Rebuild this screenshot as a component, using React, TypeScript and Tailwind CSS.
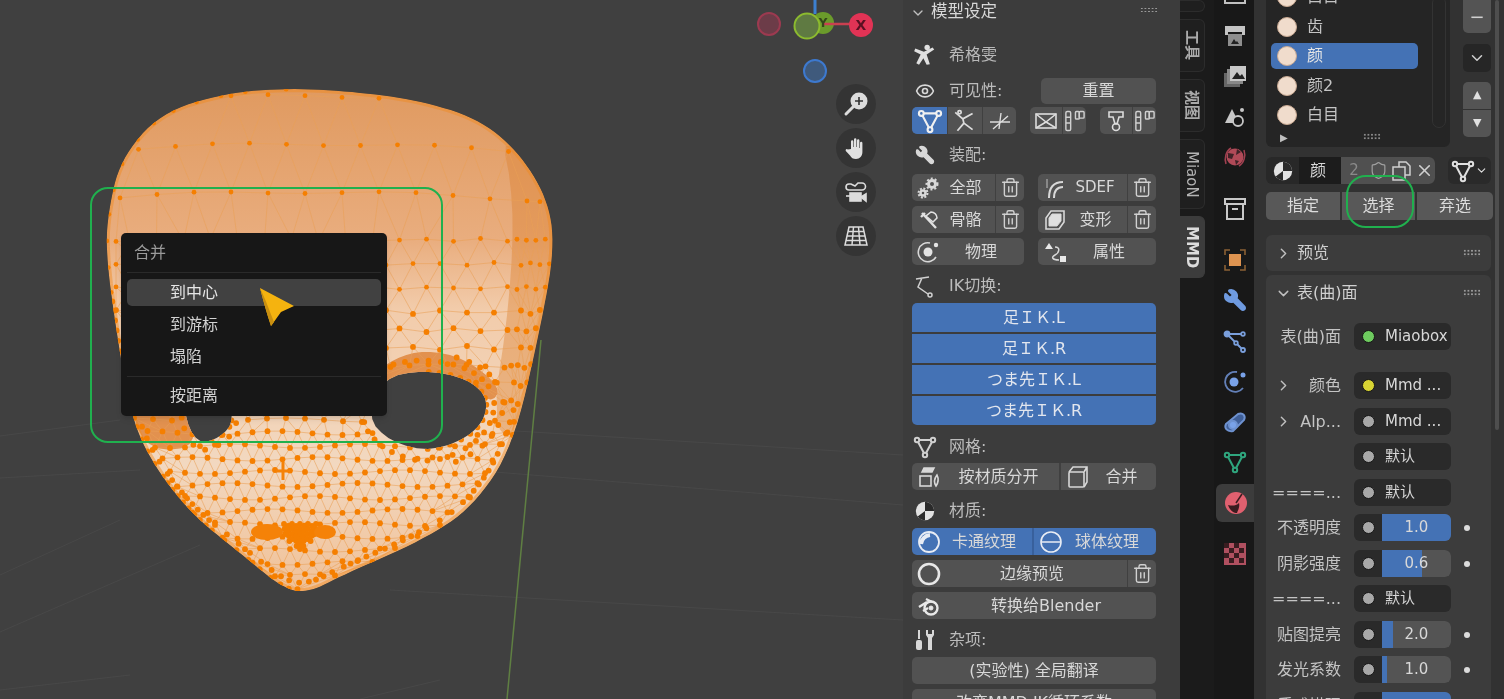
import type { ReactNode } from 'react';
import { ChevronDown, ChevronRight, Eye, Wrench, Trash2, X, Shield, Circle } from 'lucide-react';

type Pt = [number, number];

// smooth a rough outline so it can be used for both drawing and hit testing
function chaikin(points: Pt[], rounds = 3): Pt[] {
  let pts = points;
  for (let r = 0; r < rounds; r++) {
    const next: Pt[] = [];
    pts.forEach((p, i) => {
      const q = pts[(i + 1) % pts.length];
      next.push([p[0] * 0.75 + q[0] * 0.25, p[1] * 0.75 + q[1] * 0.25]);
      next.push([p[0] * 0.25 + q[0] * 0.75, p[1] * 0.25 + q[1] * 0.75]);
    });
    pts = next;
  }
  return pts;
}

function inside(p: Pt, poly: Pt[]) {
  let hit = false;
  for (let i = 0, j = poly.length - 1; i < poly.length; j = i++) {
    const [xi, yi] = poly[i];
    const [xj, yj] = poly[j];
    if (yi > p[1] !== yj > p[1] && p[0] < ((xj - xi) * (p[1] - yi)) / (yj - yi) + xi) hit = !hit;
  }
  return hit;
}

const toPath = (poly: Pt[]) => 'M' + poly.map((p) => `${p[0].toFixed(1)} ${p[1].toFixed(1)}`).join('L') + 'Z';

const outline = chaikin([
  [290, 88], [225, 93], [160, 113], [120, 160], [108, 213], [106, 253], [115, 323], [130, 413], [150, 460], [190, 513],
  [240, 553], [285, 590], [310, 592], [343, 575], [423, 540], [473, 507], [513, 447], [540, 330], [555, 247], [547, 197],
  [517, 150], [477, 118], [417, 100], [357, 92],
]);
const eyeR = chaikin([[367, 417], [383, 378], [423, 370], [467, 378], [490, 400], [478, 432], [433, 452], [390, 442]], 2);
const eyeL = chaikin([[183, 413], [197, 444], [220, 438], [235, 420], [223, 373], [190, 370]], 2);
const lid = chaikin([[368, 378], [395, 358], [425, 350], [465, 358], [502, 388], [490, 404], [467, 380], [423, 372], [383, 382]], 2);
const lidL = chaikin([[128, 410], [180, 400], [200, 446], [150, 452]], 2);
const cheek = chaikin([[500, 128], [550, 200], [555, 250], [540, 335], [513, 445], [492, 420], [510, 300], [514, 200]], 2);

function sampleEdge(poly: Pt[], step: (y: number) => number) {
  const out: Pt[] = [];
  let left = 0;
  poly.forEach((p, i) => {
    const q = poly[(i + 1) % poly.length];
    const d = Math.hypot(q[0] - p[0], q[1] - p[1]);
    left += d;
    if (left >= step(p[1])) {
      out.push(p);
      left = 0;
    }
  });
  return out;
}

function buildMesh() {
  const rows: Pt[][] = [];
  let y = 96;
  let n = 0;
  const free = (p: Pt) => inside(p, outline) && !inside(p, eyeR) && !inside(p, eyeL);
  while (y < 592) {
    const sy = y < 200 ? 48 : y < 300 ? 24 : y < 420 ? 18 : 13;
    const sx = y < 240 ? 37 : y < 360 ? 27 : y < 430 ? 19 : 15;
    const row: Pt[] = [];
    const wob = (x: number) => Math.sin(x * 0.37 + n) * (y < 300 ? 1.5 : 2);
    const bend = (x: number) => (y < 220 ? ((x - 300) / 230) ** 2 * 8 : 0);
    let x = 305 + (n % 2 ? sx / 2 : 0);
    while (x < 560) {
      row.push([x, y + wob(x) + bend(x)]);
      x += x > 495 && y < 440 ? sx * 0.35 : sx;
    }
    x = 305 + (n % 2 ? sx / 2 : 0) - sx;
    while (x > 100) {
      row.unshift([x, y + wob(x) + bend(x)]);
      x -= x < 130 && y < 440 ? sx * 0.5 : sx;
    }
    rows.push(row.filter(free));
    y += sy;
    n++;
  }
  const lines: string[] = [];
  rows.forEach((row, r) => {
    row.forEach((p, i) => {
      if (i + 1 < row.length && row[i + 1][0] - p[0] < 60) lines.push(`M${p[0].toFixed(1)} ${p[1].toFixed(1)}L${row[i + 1][0].toFixed(1)} ${row[i + 1][1].toFixed(1)}`);
      const below = rows[r + 1];
      if (!below) return;
      [...below]
        .sort((a, b) => Math.abs(a[0] - p[0]) - Math.abs(b[0] - p[0]))
        .slice(0, 2)
        .forEach((q) => lines.push(`M${p[0].toFixed(1)} ${p[1].toFixed(1)}L${q[0].toFixed(1)} ${q[1].toFixed(1)}`));
    });
  });
  const edge = sampleEdge(outline, (yy) => (yy < 300 ? 22 : 8));
  const nose: Pt[] = [];
  for (let i = 0; i < 9; i++) {
    const end = 552 - Math.abs(i - 4) * 4;
    for (let yy = 524; yy < end; yy += 5) nose.push([284 + i * 4 + (yy - 524) * (4 - i) * 0.03, yy + (i % 2) * 2]);
  }
  const rim: Pt[] = [
    ...edge,
    ...edge.filter((p) => p[1] > 400).map((p): Pt => [p[0] + (300 - p[0]) * 0.035, p[1] + (420 - p[1]) * 0.05]),
    ...sampleEdge(eyeR, () => 6),
    ...sampleEdge(eyeL, () => 6),
    ...sampleEdge(eyeR, () => 7).map((p): Pt => [p[0] + (p[0] - 430) * 0.14, p[1] + (p[1] - 410) * 0.3]),
    ...sampleEdge(eyeR, () => 7).filter((p) => p[0] > 440).map((p): Pt => [p[0] + (p[0] - 430) * 0.3, p[1] + (p[1] - 410) * 0.5]),
    ...sampleEdge(eyeL, () => 7).map((p): Pt => [p[0] + (p[0] - 208) * 0.2, p[1] + (p[1] - 410) * 0.25]),
    ...nose,
  ].filter(free);
  return { d: lines.join(''), dots: [...rows.flat(), ...rim] };
}

const mesh = buildMesh();

function FaceMesh() {
  return (
    <svg className="absolute left-0 top-0" width="903" height="699" viewBox="0 0 903 699">
      <defs>
        <linearGradient id="skin" x1="0" y1="88" x2="0" y2="592" gradientUnits="userSpaceOnUse">
          <stop offset="0" stopColor="#e09a60" />
          <stop offset="0.3" stopColor="#e9ad7e" />
          <stop offset="0.44" stopColor="#f2ccab" />
          <stop offset="0.75" stopColor="#f2d8c0" />
          <stop offset="1" stopColor="#f0c096" />
        </linearGradient>
        <clipPath id="face">
          <path d={toPath(outline) + toPath(eyeR) + toPath(eyeL)} clipRule="evenodd" />
        </clipPath>
      </defs>
      {/* floor grid */}
      <g stroke="#484848" strokeWidth="1" fill="none">
        <path d="M0 436L120 420M0 478L140 470M0 575L120 520M0 632L200 545M440 680L360 699M470 470L903 505M500 430L903 455M390 590L903 620M0 690L130 675" />
      </g>
      <path d="M541 340L507 699" stroke="#5f7f42" strokeWidth="1.5" />
      <g clipPath="url(#face)">
        <path d={toPath(outline)} fill="url(#skin)" />
        <path d={toPath(cheek)} fill="#dd7f2c" opacity="0.4" />
        <path d={toPath(lid)} fill="#e2914f" />
        <path d={toPath(lidL)} fill="#e2914f" />
        <path d={mesh.d} stroke="#ea9f57" strokeWidth="0.8" opacity="0.7" fill="none" />
        <path d={toPath(outline)} stroke="#f08a20" strokeWidth="6" opacity="0.45" fill="none" />
        {mesh.dots.map((p, i) => (
          <circle key={i} cx={p[0]} cy={p[1]} r={p[1] < 300 ? 2.400 : 2.900} fill="#f57f00" />
        ))}
        <ellipse cx="267" cy="532" rx="16" ry="8" fill="#f58208" />
        <ellipse cx="325" cy="532" rx="11" ry="7" fill="#f58208" />
        <path d="M283 462v18M276 471h14" stroke="#f58208" strokeWidth="3" />
      </g>
    </svg>
  );
}

function Gizmo() {
  return (
    <svg className="absolute left-[750px] top-0" width="130" height="90" viewBox="750 0 130 90">
      <path d="M815 0V14" stroke="#3d80d0" strokeWidth="3" />
      <circle cx="769" cy="24" r="11" fill="#6c3c48" stroke="#9c3a50" strokeWidth="2" />
      <circle cx="823" cy="23" r="11" fill="#6b9b2b" />
      <path d="M823 24H861" stroke="#c94050" strokeWidth="2.5" />
      <circle cx="807" cy="26" r="12.5" fill="#5f7a42" stroke="#8cbb2f" strokeWidth="2" />
      <text x="823" y="27" fontSize="12" fontWeight="700" textAnchor="middle" fill="#35471a">Y</text>
      <circle cx="861" cy="25" r="12" fill="#e13355" />
      <text x="861" y="30" fontSize="14" fontWeight="700" textAnchor="middle" fill="#5a1022">X</text>
      <circle cx="815" cy="71" r="11" fill="#3f5a7c" stroke="#3d79cf" strokeWidth="2" />
    </svg>
  );
}

function NavButton({ children }: { children: ReactNode }) {
  return <div className="w-10 h-10 rounded-full bg-[#343434] flex items-center justify-center text-[#dcdcdc]">{children}</div>;
}

function MenuItem({ label, active }: { label: string; active?: boolean }) {
  return (
    <div className={`h-[27px] rounded-[5px] pl-[43px] flex items-center text-[16px] ${active ? 'bg-[#414141] text-[#e6e6e6]' : 'text-[#d2d2d2]'}`}>
      {label}
    </div>
  );
}

function Viewport() {
  return (
    <div className="relative w-[903px] h-full bg-[#404040] overflow-hidden shrink-0">
      <FaceMesh />
      <Gizmo />
      <div className="absolute left-[836px] top-[84px] flex flex-col gap-1">
        <NavButton>
          <svg width="30" height="30" viewBox="0 0 30 30" fill="none">
            <circle cx="18" cy="12" r="8.5" fill="#dcdcdc" />
            <path d="M18 8v8M14 12h8" stroke="#333" strokeWidth="1.6" />
            <path d="M12 18L5 25" stroke="#dcdcdc" strokeWidth="3" strokeLinecap="round" />
          </svg>
        </NavButton>
        <NavButton>
          <svg width="26" height="26" viewBox="0 0 26 26" fill="#e2e2e2">
            <path d="M8 14V6.5a1.2 1.2 0 0 1 2.4 0V12h.6V4.5a1.2 1.2 0 0 1 2.4 0V12h.6V5.5a1.2 1.2 0 0 1 2.4 0V13h.6V8a1.2 1.2 0 0 1 2.4 0v9c0 4-2.6 7-6.4 7-3 0-4.6-1.4-6-3.6L2.800 16a1.300 1.300 0 0 1 2-1.600z" />
          </svg>
        </NavButton>
        <NavButton>
          <svg width="28" height="28" viewBox="0 0 28 28" fill="none" stroke="#dcdcdc" strokeWidth="1.6">
            <path d="M4 9a3 3 0 0 1 3-3h2l4 2 3-3h4a3 3 0 0 1 0 7H7a3 3 0 0 1-3-3z" />
            <rect x="8" y="15" width="11" height="8" fill="#dcdcdc" />
            <path d="M19 19l5-3v7z" fill="#dcdcdc" />
            <path d="M4 18h4" />
          </svg>
        </NavButton>
        <NavButton>
          <svg width="26" height="24" viewBox="0 0 26 24" fill="none" stroke="#dcdcdc" strokeWidth="1.5">
            <path d="M6 3h14l4 18H2zM4 12h18M3 16.500h20M5 7.500h16M10.500 3l-1.500 18M15.500 3l1.500 18" />
          </svg>
        </NavButton>
      </div>
      <div className="absolute left-[121px] top-[233px] w-[266px] h-[183px] rounded-[5px] bg-[#171717] px-[6px] shadow-md">
        <div className="h-[40px] pl-[7px] flex items-center text-[16px] text-[#9a9a9a] border-b border-[#2a2a2a]">合并</div>
        <div className="mt-[6px]"><MenuItem label="到中心" active /></div>
        <div className="mt-[5px]"><MenuItem label="到游标" /></div>
        <div className="mt-[5px]"><MenuItem label="塌陷" /></div>
        <div className="mt-[6px] border-t border-[#2a2a2a] pt-[5px]"><MenuItem label="按距离" /></div>
      </div>
      <svg className="absolute left-[255px] top-[284px]" width="44" height="46" viewBox="0 0 44 46">
        <path d="M5 4L39 22L26 28L16 42C12 30 8 16 5 4Z" fill="#f5b30f" />
        <path d="M5 4C8 16 12 30 16 42L19 38C15 28 10 14 5 4Z" fill="#c98f10" />
      </svg>
      <div className="absolute left-[90px] top-[187px] w-[353px] h-[256px] rounded-[18px] border-2 border-[#20b04e]" />
    </div>
  );
}

function MeshIcon({ size = 22, color = 'currentColor', hole = '#3c3c3c' }: { size?: number; color?: string; hole?: string }) {
  return (
    <svg width={size} height={size} viewBox="0 0 24 24" fill="none" stroke={color} strokeWidth="2">
      <path d="M4 5H20L12 20Z" />
      <circle cx="4" cy="5" r="2.200" fill={hole} />
      <circle cx="20" cy="5" r="2.200" fill={hole} />
      <circle cx="12" cy="20" r="2.200" fill={hole} />
    </svg>
  );
}

function Tile({ label, icon, className, labelClass }: { label?: string; icon?: ReactNode; className?: string; labelClass?: string }) {
  return (
    <div className={`relative h-full flex items-center justify-center text-[16px] text-[#d8d8d8] ${className ?? ''}`}>
      {icon && <span className="absolute left-[4px] top-0 bottom-0 w-[26px] flex items-center justify-center">{icon}</span>}
      {label && <span className={labelClass}>{label}</span>}
    </div>
  );
}

function Trash() {
  return (
    <div className="w-[29px] h-full flex items-center justify-center border-l border-[#404040] text-[#d0d0d0]">
      <Trash2 size={21} strokeWidth={1.6} />
    </div>
  );
}

function Row({ children, className }: { children: ReactNode; className?: string }) {
  return <div className={`flex h-[27px] gap-[14px] ${className ?? ''}`}>{children}</div>;
}

function Group({ children, className }: { children: ReactNode; className?: string }) {
  return <div className={`flex h-full rounded-[5px] overflow-hidden bg-[#525252] ${className ?? ''}`}>{children}</div>;
}

function Heading({ icon, label, className }: { icon: ReactNode; label: string; className?: string }) {
  return (
    <div className={`flex items-center h-5 text-[16px] text-[#bcbcbc] ${className ?? ''}`}>
      <span className="w-[26px] flex justify-center text-[#d8d8d8]">{icon}</span>
      <span className="ml-[11px]">{label}</span>
    </div>
  );
}

function MaterialIcon({ size = 22 }: { size?: number }) {
  return (
    <svg width={size} height={size} viewBox="0 0 24 24">
      <circle cx="12" cy="12" r="10" fill="#e2e2e2" />
      <path d="M12 2A10 10 0 0 1 22 12H12ZM12 12L4 18A10 10 0 0 0 12 22Z" fill="#2a2a2a" />
    </svg>
  );
}

function BoneBars() {
  return (
    <svg width="24" height="24" viewBox="0 0 24 24" fill="none" stroke="#d0d0d0" strokeWidth="1.500">
      <rect x="3" y="2" width="5" height="20" rx="1.500" />
      <path d="M3 8h5M3 14h5" />
      <rect x="13" y="2" width="4" height="8" rx="1" />
      <rect x="17" y="2" width="5" height="7" rx="1" />
    </svg>
  );
}

function SidePanel() {
  return (
    <div className="w-[277px] h-full shrink-0 bg-[#3c3c3c] overflow-hidden pl-[9px] pr-[24px]">
      <div className="h-[25px] flex items-center text-[#d8d8d8] relative">
        <ChevronDown size={16} className="ml-[-2px] text-[#c0c0c0]" />
        <span className="ml-[5px] text-[16.500px]">模型设定</span>
        <span className="absolute right-[-2px] top-[7px] w-[18px] h-[6px] bg-[radial-gradient(#9a9a9a_1px,transparent_1.200px)] bg-[length:3.600px_3px]" />
      </div>
      <div className="mt-[18px] h-[24px] flex items-center text-[16px] text-[#b8b8b8]">
        <svg width="26" height="26" viewBox="0 0 24 24" fill="#e0e0e0">
          <circle cx="14" cy="5" r="2.500" />
          <path d="M3 6l8 3 8-4 1.500 2-7 4.500 3 9-3 .5-3-6-4 6-2.500-1.500 4-8-6-3z" />
        </svg>
        <span className="ml-[11px]">希格雯</span>
      </div>
      <div className="mt-[11px] h-[26px] flex items-center text-[16px] text-[#bcbcbc]">
        <span className="w-[26px] flex justify-center text-[#d8d8d8]"><Eye size={20} /></span>
        <span className="ml-[11px]">可见性:</span>
        <div className="ml-auto w-[115px] h-full rounded-[5px] bg-[#525252] flex items-center justify-center text-[#d8d8d8]">重置</div>
      </div>
      <div className="mt-[3px] flex h-[27px] gap-[14px]">
        <Group className="w-[104px]">
          <div className="w-[35px] flex items-center justify-center bg-[#4472b5] text-white"><MeshIcon size={26} color="#f0f0f0" hole="#4472b5" /></div>
          <div className="w-[35px] flex items-center justify-center border-l border-[#404040]">
            <svg width="26" height="26" viewBox="0 0 24 24" fill="none" stroke="#dcdcdc" strokeWidth="1.600"><circle cx="7" cy="4" r="1.500" /><path d="M3 4l7 6 9-5M10 10l1 4-6 7M11 14l8 6" /></svg>
          </div>
          <div className="flex-1 flex items-center justify-center border-l border-[#404040]">
            <svg width="24" height="24" viewBox="0 0 24 24" fill="none" stroke="#dcdcdc" strokeWidth="1.400"><path d="M13 4L11 20M2 13H22M5 20L20 7" /></svg>
          </div>
        </Group>
        <Group className="w-[56px]">
          <div className="flex-1 flex items-center justify-center">
            <svg width="26" height="24" viewBox="0 0 24 24" fill="none" stroke="#dcdcdc" strokeWidth="1.600"><rect x="2" y="5" width="20" height="14" /><path d="M2 5l10 8 10-8M2 19l10-6 10 6" /></svg>
          </div>
          <div className="w-[24px] flex items-center justify-center border-l border-[#404040]"><BoneBars /></div>
        </Group>
        <Group className="w-[56px]">
          <div className="flex-1 flex items-center justify-center">
            <svg width="24" height="24" viewBox="0 0 24 24" fill="none" stroke="#dcdcdc" strokeWidth="1.600"><path d="M5 3h14v5H15l-2 7h-2L9 8H5z" /><circle cx="12" cy="18" r="3.500" /></svg>
          </div>
          <div className="w-[24px] flex items-center justify-center border-l border-[#404040]"><BoneBars /></div>
        </Group>
      </div>

      <Heading className="mt-[11px]" label="装配:" icon={<Wrench size={20} fill="#d8d8d8" className="-scale-x-100" />} />
      <Row className="mt-[9px]">
        <Group className="w-[112px]">
          <Tile className="flex-1" label="全部" labelClass="ml-[24px]" icon={
            <svg width="24" height="24" viewBox="0 0 24 24" fill="none" stroke="#d8d8d8"><circle cx="15" cy="8" r="3.500" strokeWidth="3" /><circle cx="15" cy="8" r="5.500" strokeWidth="2" strokeDasharray="2 2" /><circle cx="6" cy="17" r="2.500" strokeWidth="2.500" /><circle cx="6" cy="17" r="4.500" strokeWidth="2" strokeDasharray="2 1.500" /></svg>
          } />
          <Trash />
        </Group>
        <Group className="w-[118px]">
          <Tile className="flex-1" labelClass="ml-[25px] text-[15px]" label="SDEF" icon={
            <svg width="24" height="24" viewBox="0 0 24 24" fill="none" stroke="#d8d8d8" strokeWidth="2"><path d="M6 22C6 12 10 6 20 6M11 22C11 15 14 11 20 11" /><path d="M4 3v9" stroke="#888" /></svg>
          } />
          <Trash />
        </Group>
      </Row>
      <Row className="mt-[5px]">
        <Group className="w-[112px]">
          <Tile className="flex-1" label="骨骼" labelClass="ml-[24px]" icon={
            <svg width="24" height="24" viewBox="0 0 24 24" fill="none" stroke="#e0e0e0" strokeWidth="2.400"><path d="M5 5l14 15M4 9l4-4" /><path d="M14 4a6 6 0 0 1 6 6l-4 4-7-6z" strokeWidth="1.600" /></svg>
          } />
          <Trash />
        </Group>
        <Group className="w-[118px]">
          <Tile className="flex-1" labelClass="ml-[26px]" label="变形" icon={
            <svg width="24" height="24" viewBox="0 0 24 24" fill="#e0e0e0" stroke="#d8d8d8" strokeWidth="1"><path d="M8 3H21V14L16 21H3V10Z" fill="none" strokeWidth="1.600" /><path d="M9 6H18V13L14 18H6V10Z" /></svg>
          } />
          <Trash />
        </Group>
      </Row>
      <Row className="mt-[5px]">
        <Group className="w-[112px]">
          <Tile className="flex-1" label="物理" labelClass="ml-[26px]" icon={
            <svg width="24" height="24" viewBox="0 0 24 24" fill="none"><path d="M19 17A9.500 9.500 0 1 1 13 3" stroke="#d8d8d8" strokeWidth="1.600" /><circle cx="11" cy="12" r="4.500" fill="#e4e4e4" /><circle cx="19" cy="5" r="2.200" fill="#e4e4e4" /></svg>
          } />
        </Group>
        <Group className="w-[118px]">
          <Tile className="flex-1" label="属性" labelClass="ml-[24px]" icon={
            <svg width="24" height="24" viewBox="0 0 24 24" fill="#e8e8e8"><path d="M6 3l4 6H2z" /><rect x="17" y="16" width="6" height="6" /><path d="M12 7c6 0 4 6 0 8s-3 5 4 5" fill="none" stroke="#d8d8d8" strokeWidth="1.500" /></svg>
          } />
        </Group>
      </Row>

      <Heading className="mt-[11px]" label="IK切换:" icon={
        <svg width="24" height="24" viewBox="0 0 24 24" fill="none" stroke="#d0d0d0" strokeWidth="1.500"><path d="M3 5l13-2M9 4L5 13l10 7" /><circle cx="17" cy="21" r="2" /></svg>
      } />
      <div className="mt-[7px] flex flex-col gap-[2px] text-[16px] text-[#e2e6ee]">
        <div className="h-[29px] rounded-t-[5px] bg-[#4472b5] flex items-center justify-center">足ＩＫ.L</div>
        <div className="h-[29px] bg-[#4472b5] flex items-center justify-center">足ＩＫ.R</div>
        <div className="h-[29px] bg-[#4472b5] flex items-center justify-center">つま先ＩＫ.L</div>
        <div className="h-[29px] rounded-b-[5px] bg-[#4472b5] flex items-center justify-center">つま先ＩＫ.R</div>
      </div>

      <Heading className="mt-[12px]" label="网格:" icon={<MeshIcon size={24} color="#d0d0d0" />} />
      <Row className="mt-[6px] gap-0">
        <Group className="w-full">
          <Tile className="w-[147px]" label="按材质分开" labelClass="ml-[26px]" icon={
            <svg width="24" height="24" viewBox="0 0 24 24" fill="none" stroke="#d8d8d8" strokeWidth="1.600"><path d="M5 7l2-4h10l-2 4z" fill="#d8d8d8" /><rect x="3" y="11" width="11" height="10" /><path d="M20 10c-3 4-3 8-1 11 2-3 3-7 1-11z" /></svg>
          } />
          <Tile className="flex-1 border-l-2 border-[#404040]" label="合并" labelClass="ml-[26px]" icon={
            <svg width="24" height="24" viewBox="0 0 24 24" fill="none" stroke="#d8d8d8" strokeWidth="1.600"><rect x="3" y="7" width="15" height="15" rx="1" /><path d="M3 7l4-5h14v15l-3 5M18 7l3-5" /></svg>
          } />
        </Group>
      </Row>

      <Heading className="mt-[11px]" label="材质:" icon={<MaterialIcon />} />
      <Row className="mt-[7px] gap-0">
        <div className="flex w-full h-full rounded-[5px] overflow-hidden bg-[#4472b5]">
          <Tile className="w-[120px]" label="卡通纹理" labelClass="ml-[24px]" icon={
            <svg width="24" height="24" viewBox="0 0 24 24" fill="none" stroke="#e8ecf4" strokeWidth="1.800"><circle cx="12" cy="12" r="10" /><path d="M4 14A10 10 0 0 1 13 5" strokeWidth="4" /></svg>
          } />
          <Tile className="flex-1 border-l-2 border-[#38609c]" label="球体纹理" labelClass="ml-[24px]" icon={
            <svg width="24" height="24" viewBox="0 0 24 24" fill="none" stroke="#e8ecf4" strokeWidth="1.600"><circle cx="12" cy="12" r="10" /><path d="M2 12h20" /></svg>
          } />
        </div>
      </Row>
      <Row className="mt-[5px] gap-0">
        <Group className="w-full">
          <Tile className="flex-1" label="边缘预览" labelClass="ml-[25px]" icon={<Circle size={24} strokeWidth={2.600} className="text-[#e8e8e8]" />} />
          <Trash />
        </Group>
      </Row>
      <Row className="mt-[5px] gap-0">
        <Group className="w-full">
          <Tile className="flex-1" label="转换给Blender" labelClass="ml-[24px]" icon={
            <svg width="24" height="24" viewBox="0 0 24 24" fill="none" stroke="#e8e8e8" strokeWidth="2.400"><circle cx="14" cy="14" r="6.500" /><circle cx="14" cy="14" r="2" fill="#e8e8e8" strokeWidth="1" /><path d="M2 13l8-5M6 17l5-3M9 5l6 3" /></svg>
          } />
        </Group>
      </Row>

      <Heading className="mt-[11px]" label="杂项:" icon={
        <svg width="24" height="24" viewBox="0 0 24 24" fill="#d8d8d8"><rect x="5" y="2" width="2" height="9" /><rect x="3" y="12" width="6" height="10" rx="2" /><path d="M13 2v5l2 3v12h4V10l2-3V2h-2v4h-4V2z" /></svg>
      } />
      <Row className="mt-[7px] gap-0">
        <Group className="w-full"><Tile className="flex-1" label="(实验性) 全局翻译" /></Group>
      </Row>
      <Row className="mt-[5px] gap-0">
        <Group className="w-full"><Tile className="flex-1" label="改变MMD IK循环系数" /></Group>
      </Row>
    </div>
  );
}

function VTab({ label, className }: { label?: string; className: string }) {
  return (
    <div className={`w-[25px] rounded-r-[6px] border-r border-y flex items-center justify-center text-[15px] ${className}`}>
      <span className="[writing-mode:vertical-rl] [text-orientation:sideways]">{label}</span>
    </div>
  );
}

function PanelTabs() {
  return (
    <div className="w-[27px] h-full shrink-0 bg-[#1b1b1b] flex flex-col">
      <VTab className="h-[12px] bg-[#1f1f1f] border-[#2c2c2c]" />
      <VTab label="工具" className="mt-[7px] h-[53px] bg-[#1f1f1f] border-[#2c2c2c] text-[#aaaaaa] font-semibold" />
      <VTab label="视图" className="mt-[7px] h-[53px] bg-[#1f1f1f] border-[#2c2c2c] text-[#aaaaaa] font-semibold" />
      <VTab label="MiaoN" className="mt-[7px] h-[70px] bg-[#1f1f1f] border-[#2c2c2c] text-[#b4b4b4]" />
      <VTab label="MMD" className="mt-[7px] h-[62px] bg-[#3c3c3c] border-[#3c3c3c] text-[#dcdcdc] font-semibold" />
    </div>
  );
}

function PropIcon({ children, className }: { children: ReactNode; className: string }) {
  return <div className={`h-[24px] flex items-center justify-center ${className}`}>{children}</div>;
}

function PropertyTabs() {
  return (
    <div className="w-[47px] h-full shrink-0 bg-[#1b1b1b] pl-[7px] overflow-hidden">
      <div className="w-full h-full bg-[#181818] flex flex-col pl-[2px]">
        <PropIcon className="-mt-[20px]">
          <svg width="22" height="24" viewBox="0 0 22 24" fill="none" stroke="#c0c0c0" strokeWidth="2"><rect x="1" y="2" width="20" height="21" /></svg>
        </PropIcon>
        <PropIcon className="mt-[20px]">
          <svg width="24" height="24" viewBox="0 0 24 24"><path d="M2 2h20v9h-3v-3H5v3H2z" fill="#c4c4c4" /><rect x="5" y="10" width="14" height="12" fill="#8e8e8e" /><path d="M8 20l3-5 2 3 1-1 2 3z" fill="#222" /></svg>
        </PropIcon>
        <PropIcon className="mt-[16px]">
          <svg width="24" height="24" viewBox="0 0 24 24"><path d="M1 9h3v11h13v3H1z" fill="#666" /><rect x="4" y="5" width="16" height="15" fill="#888" /><rect x="7" y="2" width="16" height="15" fill="#c8c8c8" /><path d="M9 15l5-7 3 4 2-2 3 5z" fill="#222" /></svg>
        </PropIcon>
        <PropIcon className="mt-[16px]">
          <svg width="24" height="24" viewBox="0 0 24 24" fill="#c8c8c8"><path d="M9 5l7 14H2z" /><circle cx="19" cy="6" r="2" /><circle cx="15" cy="17" r="5" fill="#181818" stroke="#c8c8c8" strokeWidth="1.800" /></svg>
        </PropIcon>
        <PropIcon className="mt-[17px]">
          <svg width="24" height="24" viewBox="0 0 24 24"><circle cx="12" cy="12" r="8.500" fill="#b04a58" /><path d="M5 8l6 1-2 5-4-1zM14 4l4 3-5 3zM12 15l4 1-3 4z" fill="#3f2227" /><path d="M3 19C1 13 3 6 8 3M21 5c2 6 0 13-5 16" stroke="#a04050" strokeWidth="1.500" fill="none" /></svg>
        </PropIcon>
        <PropIcon className="mt-[28px] text-[#c8c8c8]">
          <svg width="24" height="24" viewBox="0 0 24 24" fill="none" stroke="#c8c8c8" strokeWidth="2"><rect x="2" y="2" width="20" height="5" /><path d="M4 7v15h16V7" /><path d="M9 12h6" /></svg>
        </PropIcon>
        <PropIcon className="mt-[27px]">
          <svg width="24" height="24" viewBox="0 0 24 24" fill="none" stroke="#8a6034" strokeWidth="1.600"><rect x="6" y="6" width="12" height="12" fill="#dd9350" stroke="none" /><path d="M2 7V2h5M17 2h5v5M22 17v5h-5M7 22H2v-5" /></svg>
        </PropIcon>
        <PropIcon className="mt-[16px]"><Wrench size={24} fill="#6f9be0" stroke="#6f9be0" className="-scale-x-100" /></PropIcon>
        <PropIcon className="mt-[17px]">
          <svg width="24" height="24" viewBox="0 0 24 24" fill="none" stroke="#7a9fdc" strokeWidth="1.800"><circle cx="4" cy="5" r="2.500" fill="#7a9fdc" /><circle cx="20" cy="5" r="1.800" /><circle cx="13" cy="14" r="1.800" /><circle cx="20" cy="21" r="2" /><path d="M4 5H18M4 5L12 13M14 15L19 20" /></svg>
        </PropIcon>
        <PropIcon className="mt-[17px]">
          <svg width="24" height="24" viewBox="0 0 24 24" fill="none"><path d="M20 18A10 10 0 1 1 14 2" stroke="#6380b8" strokeWidth="1.800" /><circle cx="11" cy="12" r="4.500" fill="#79a2e8" /><circle cx="20" cy="5" r="2.500" fill="#79a2e8" /></svg>
        </PropIcon>
        <PropIcon className="mt-[16px]">
          <svg width="24" height="24" viewBox="0 0 24 24" fill="none" stroke="#6e92d0" strokeWidth="2"><path d="M3 14L15 4c5-2 8 2 6 6L10 21C4 22 1 18 3 14z" fill="#3f5f98" /><circle cx="10" cy="15" r="4" fill="#79a2e8" /></svg>
        </PropIcon>
        <PropIcon className="mt-[16px]"><MeshIcon size={24} color="#2fa67e" hole="#181818" /></PropIcon>
        <div className="mt-[10px] -mr-px h-[38px] rounded-l-[6px] bg-[#3c3c3c] flex items-center justify-center">
          <svg width="24" height="24" viewBox="0 0 24 24"><circle cx="12" cy="12" r="11" fill="#e0606f" /><path d="M4 14c2 6 6 8 9 8 1-3 3-6 2-10-3 3-7 3-11 2z" fill="#3a1c20" /><path d="M12 12L18 3" stroke="#3a1c20" strokeWidth="1.500" /></svg>
        </div>
        <PropIcon className="mt-[20px]">
          <svg width="22" height="22" viewBox="0 0 22 22"><rect width="22" height="22" fill="#b05060" /><path d="M0 0h5v5H0zM10 0h5v5h-5zM5 5h5v5H5zM15 5h5v5h-5zM0 10h5v5H0zM10 10h5v5h-5zM5 15h5v5H5zM15 15h5v5h-5z" fill="#3a1c20" /></svg>
        </PropIcon>
      </div>
    </div>
  );
}

function ListRow({ label, selected }: { label: string; selected?: boolean }) {
  return (
    <div className={`h-[26px] mb-[3.500px] ml-[5px] mr-[32px] rounded-[5px] flex items-center pl-[6px] text-[16px] ${selected ? 'bg-[#4472b5] text-[#e6e6e6]' : 'text-[#c4c4c4]'}`}>
      <span className="w-[20px] h-[20px] rounded-full bg-[#f0dccc] border border-[#c9a992] shrink-0" />
      <span className="ml-[10px]">{label}</span>
    </div>
  );
}

type Field = { label?: string; caret?: boolean; dot?: string; text?: string; fill?: number; num?: string };

const fields: Field[] = [
  { label: '表(曲)面', dot: '#6ecb5f', text: 'Miaobox' },
  { label: '颜色', caret: true, dot: '#d8d433', text: 'Mmd ...' },
  { label: 'Alp...', caret: true, dot: '#a8a8a8', text: 'Mmd ...' },
  { dot: '#a8a8a8', text: '默认' },
  { label: '====...', dot: '#a8a8a8', text: '默认' },
  { label: '不透明度', dot: '#a8a8a8', fill: 100, num: '1.0' },
  { label: '阴影强度', dot: '#a8a8a8', fill: 58, num: '0.6' },
  { label: '====...', dot: '#a8a8a8', text: '默认' },
  { label: '贴图提亮', dot: '#a8a8a8', fill: 16, num: '2.0' },
  { label: '发光系数', dot: '#a8a8a8', fill: 7, num: '1.0' },
  { label: '质感描理', dot: '#a8a8a8', fill: 100, num: '' },
];

function FieldRow({ f, className }: { f: Field; className?: string }) {
  return (
    <div className={`flex items-center h-[27px] ${className ?? ''}`}>
      <div className="w-[74px] ml-[1px] flex items-center justify-end text-[16px] text-[#c4c4c4] whitespace-nowrap">
        {f.caret && <ChevronRight size={17} className="mr-auto ml-[8px] text-[#c0c0c0]" />}
        {f.label}
      </div>
      <div className="ml-[13px] w-[97px] h-full rounded-[6px] overflow-hidden bg-[#2a2a2a] flex text-[15px] text-[#d8d8d8]">
        <div className="w-[28px] shrink-0 flex items-center justify-center">
          <span className="w-[11px] h-[11px] rounded-full border border-[#161616] box-content" style={{ background: f.dot }} />
        </div>
        {f.num !== undefined ? (
          <div className="relative flex-1 bg-[#545454] flex items-center justify-center">
            <div className="absolute left-0 top-0 bottom-0 bg-[#4472b5]" style={{ width: `${f.fill}%` }} />
            <span className="relative">{f.num}</span>
          </div>
        ) : (
          <div className="pl-[3px] flex items-center whitespace-nowrap overflow-hidden">{f.text}</div>
        )}
      </div>
      {f.num !== undefined && <span className="ml-[13px] w-[6px] h-[6px] rounded-full bg-[#dcdcdc]" />}
    </div>
  );
}

function SectionHead({ label, open }: { label: string; open?: boolean }) {
  return (
    <div className="relative h-[36px] flex items-center text-[16px] text-[#d0d0d0]">
      {open ? <ChevronDown size={17} className="ml-[9px] text-[#c0c0c0]" /> : <ChevronRight size={17} className="ml-[9px] text-[#c0c0c0]" />}
      <span className="ml-[5px]">{label}</span>
      <span className="absolute right-[10px] top-[14px] w-[18px] h-[8px] bg-[radial-gradient(#9a9a9a_1px,transparent_1.200px)] bg-[length:3.600px_3.500px]" />
    </div>
  );
}

function PropertiesPanel() {
  return (
    <div className="relative flex-1 h-full bg-[#323232] pl-[12px] pr-[13px] overflow-hidden">
      <div className="flex h-[147px]">
        <div className="relative w-[186px] h-full rounded-b-[6px] bg-[#252525] overflow-hidden">
          <div className="-mt-[16px]">
            <ListRow label="白目" />
            <ListRow label="齿" />
            <ListRow label="颜" selected />
            <ListRow label="颜2" />
            <ListRow label="白目" />
          </div>
          <div className="absolute left-[166px] -top-[4px] w-[14px] h-[132px] rounded-full border border-[#333333]" />
          <span className="absolute left-[14px] top-[130px] text-[10px] text-[#c0c0c0]">▶</span>
          <span className="absolute left-[97px] top-[133px] w-[18px] h-[7px] bg-[radial-gradient(#8a8a8a_1px,transparent_1.200px)] bg-[length:3.600px_3.500px]" />
        </div>
        <div className="ml-[13px] w-[28px] flex flex-col">
          <div className="h-[33px] rounded-b-[5px] bg-[#545454] flex items-center justify-center text-[#d0d0d0] text-[18px]">−</div>
          <div className="mt-[11px] h-[28px] rounded-[5px] bg-[#262626] flex items-center justify-center"><ChevronDown size={18} className="text-[#d0d0d0]" /></div>
          <div className="mt-[10px] h-[27px] rounded-t-[5px] bg-[#545454] flex items-center justify-center text-[#e0e0e0] text-[11px]">▲</div>
          <div className="mt-px h-[27px] rounded-b-[5px] bg-[#545454] flex items-center justify-center text-[#e0e0e0] text-[11px]">▼</div>
        </div>
      </div>
      <div className="mt-[10px] flex h-[27px]">
        <div className="w-[169px] h-full rounded-[6px] bg-[#282828] flex items-center overflow-hidden">
          <span className="w-[33px] flex justify-center"><MaterialIcon size={22} /></span>
          <div className="w-[42px] h-full bg-[#1c1c1c] flex items-center pl-[11px] text-[16px] text-[#d8d8d8]">颜</div>
          <div className="flex-1 h-full bg-[#505050] flex items-center text-[#a0a0a0]">
            <span className="w-[26px] text-center text-[15px] text-[#8a8a8a]">2</span>
            <span className="w-[23px] flex justify-center"><Shield size={19} strokeWidth={1.500} /></span>
            <span className="w-[24px] flex justify-center">
              <svg width="20" height="20" viewBox="0 0 20 20" fill="none" stroke="#d0d0d0" strokeWidth="1.500"><path d="M7 6V1h7l4 4v9h-5M1 6h12v13H1z" /></svg>
            </span>
            <span className="flex-1 flex justify-center"><X size={19} className="text-[#d0d0d0]" /></span>
          </div>
        </div>
        <div className="ml-[13px] flex-1 h-full rounded-[6px] bg-[#2a2a2a] flex items-center justify-center text-[#e0e0e0]">
          <MeshIcon size={24} color="#e0e0e0" hole="#2a2a2a" />
          <ChevronDown size={13} />
        </div>
      </div>
      <div className="mt-[8px] -mr-[2px] flex h-[28px] gap-[2px] text-[16px] text-[#dcdcdc]">
        <div className="w-[74px] rounded-l-[5px] bg-[#585858] flex items-center justify-center">指定</div>
        <div className="w-[73px] bg-[#585858] flex items-center justify-center">选择</div>
        <div className="flex-1 rounded-r-[5px] bg-[#585858] flex items-center justify-center">弃选</div>
      </div>
      <div className="mt-[15px] rounded-[6px] bg-[#3c3c3c]">
        <SectionHead label="预览" />
      </div>
      <div className="mt-[4px] rounded-[6px] bg-[#3c3c3c] h-[460px]">
        <SectionHead label="表(曲)面" open />
        <FieldRow f={fields[0]} className="mt-[12px]" />
        <FieldRow f={fields[1]} className="mt-[22px]" />
        {fields.slice(2).map((f, i) => (
          <FieldRow key={i} f={f} className={i % 2 ? 'mt-[8px]' : 'mt-[9px]'} />
        ))}
      </div>
      <div className="absolute right-[5px] top-0 w-[4px] h-[430px] bg-[#4e4e4e] rounded-full" />
      {/* highlight drawn over the select button */}
      <div className="absolute left-[92px] top-[175px] w-[68px] h-[53px] rounded-[20px] border-2 border-[#20b04e]" />
    </div>
  );
}

export default function App() {
  return (
    <div className="flex w-[1504px] h-[699px] overflow-hidden blur-[0.5px] font-['DejaVu_Sans','Noto_Sans_CJK_SC',sans-serif]">
      <Viewport />
      <SidePanel />
      <PanelTabs />
      <PropertyTabs />
      <PropertiesPanel />
    </div>
  );
}
